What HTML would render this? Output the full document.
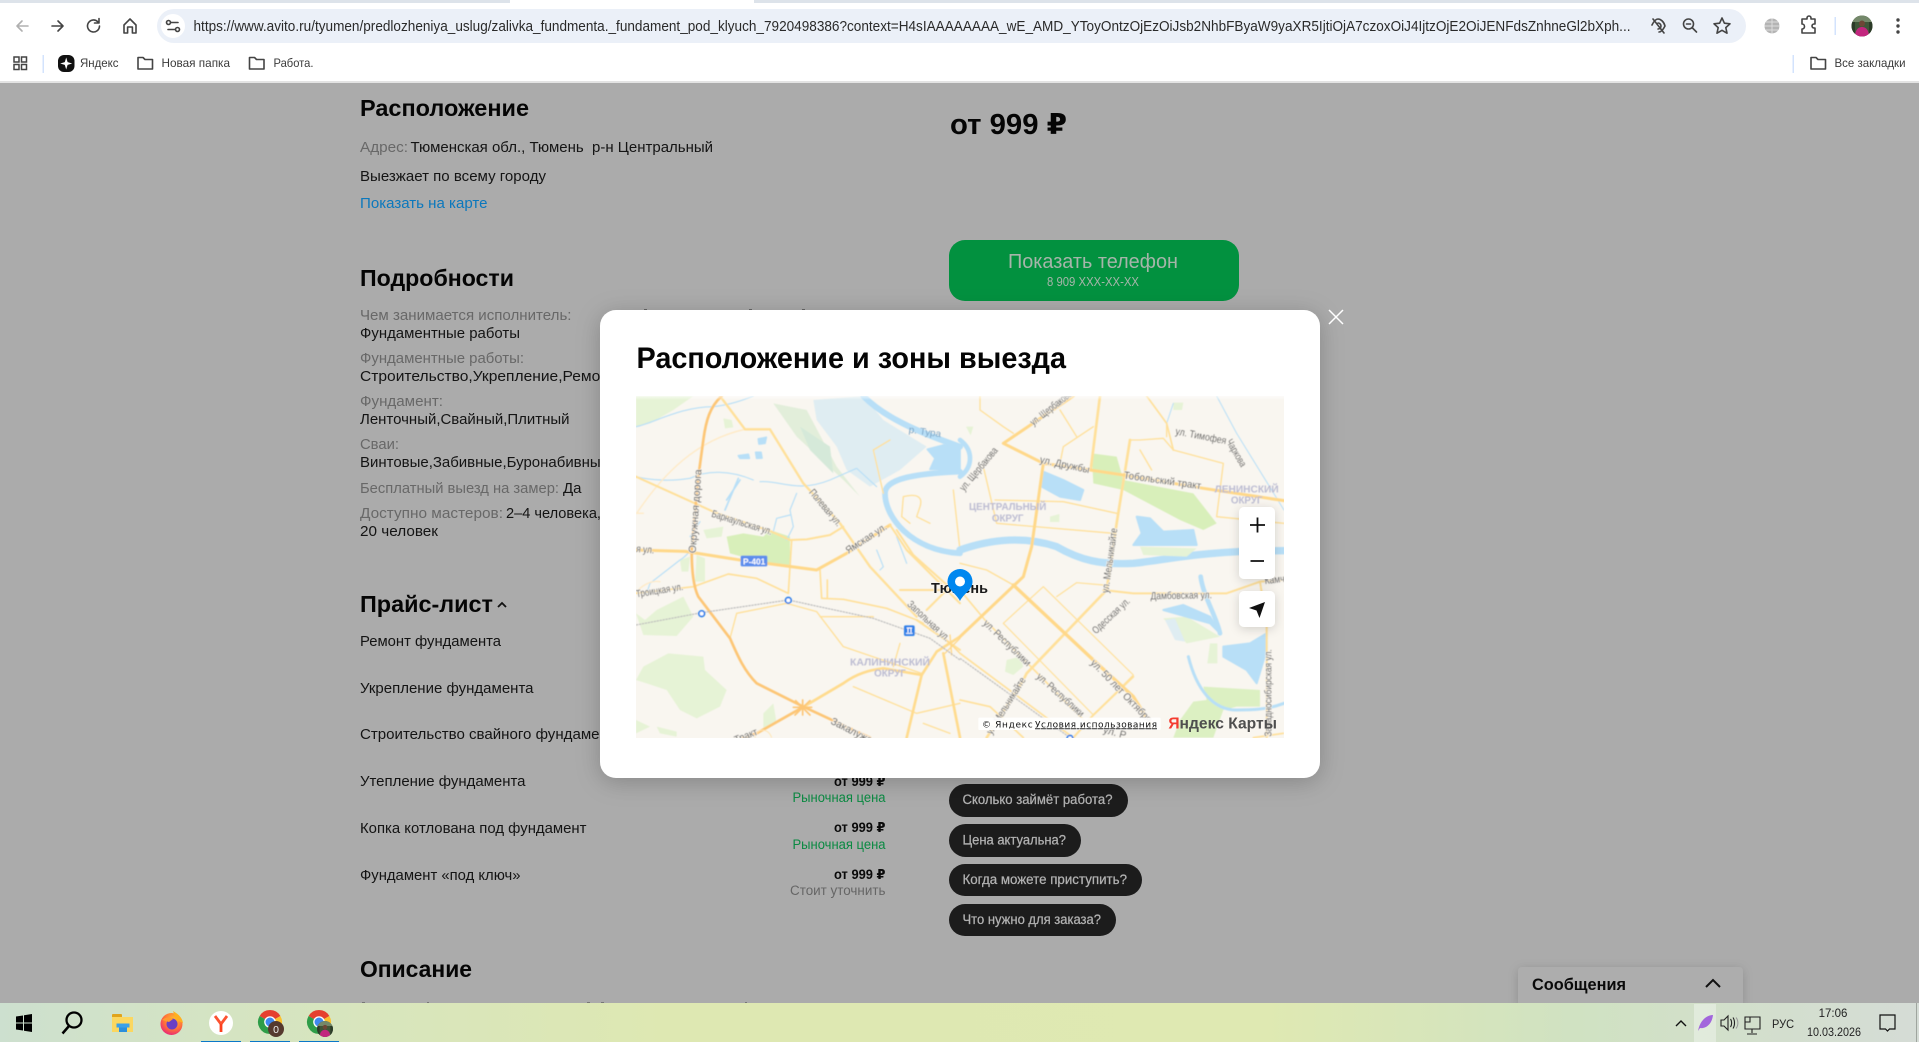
<!DOCTYPE html>
<html lang="ru"><head><meta charset="utf-8"><title>Авито</title>
<style>
html,body{margin:0;padding:0;background:#ababab;overflow:hidden}
svg{display:block;font-family:"Liberation Sans","DejaVu Sans",sans-serif}
.g{fill:#686868}.k{fill:#141414}.b{font-weight:bold;fill:#050505}
.l{font-size:31px;fill:#555;paint-order:stroke;stroke:#f9f6f0;stroke-width:4px}
.o{font-size:29px;font-weight:bold;fill:#bcbcd2;text-anchor:middle}
.i{fill:none;stroke:#444;stroke-width:1.6;stroke-linecap:round;stroke-linejoin:round}
.w{fill:none;stroke:#b8dff7;stroke-linecap:round;stroke-linejoin:round}
.r{fill:none;stroke:#ffe09a;stroke-linecap:round;stroke-linejoin:round}
.m{stroke-linejoin:round}
</style></head><body>
<svg xmlns="http://www.w3.org/2000/svg" width="1919" height="1042" viewBox="0 0 1919 1042">
<defs>
<linearGradient id="tb" x1="0" x2="1" y1="0" y2="0"><stop offset="0" stop-color="#cde0cf"/><stop offset=".12" stop-color="#d5e4c2"/><stop offset=".35" stop-color="#dee8b2"/><stop offset=".66" stop-color="#dfe9b2"/><stop offset=".82" stop-color="#d0e2c2"/><stop offset="1" stop-color="#d5dcd6"/></linearGradient>
<radialGradient id="ff" cx=".6" cy=".3" r=".8"><stop offset="0" stop-color="#ffc22e"/><stop offset=".55" stop-color="#ff7139"/><stop offset="1" stop-color="#e31587"/></radialGradient>
<filter id="sh" x="-10%" y="-10%" width="120%" height="120%"><feDropShadow dx="0" dy="4" stdDeviation="12" flood-color="#000" flood-opacity=".22"/></filter>
<filter id="sm" x="-40%" y="-40%" width="180%" height="180%"><feDropShadow dx="0" dy="2" stdDeviation="5" flood-color="#000" flood-opacity=".16"/></filter>
<filter id="bl" x="0" y="0" width="100%" height="100%"><feGaussianBlur stdDeviation=".45"/></filter>
<clipPath id="mc"><rect x="636" y="396" width="648" height="342"/></clipPath>
<clipPath id="av"><circle cx="0" cy="0" r="10.5"/></clipPath>
<linearGradient id="mt" x1="0" x2="0" y1="0" y2="1"><stop offset="0" stop-color="#fff" stop-opacity=".6"/><stop offset="1" stop-color="#fff" stop-opacity="0"/></linearGradient>
<g id="fold"><path class="i" fill="none" d="M-7,-5.5h5l2,2h7.500v9.500h-14.500z"/></g>
<g id="chr"><path fill="#e5402f" d="M0,0L-10.400,-6A12,12 0 0 1 10.400,-6z"/><path fill="#fbc02d" d="M0,0L10.400,-6A12,12 0 0 1 0,12z"/><path fill="#2e9d48" d="M0,0L0,12A12,12 0 0 1 -10.400,-6z"/><circle r="5.800" fill="#fff"/><circle r="4.500" fill="#3f88ee"/></g>
<g id="face"><circle r="10.500" fill="#3f5638"/><g clip-path="url(#av)"><rect x="-11" y="-11" width="22" height="7" fill="#74886a"/><rect x="-11" y="-4" width="4" height="15" fill="#2c3b28"/><rect x="7" y="-4" width="4" height="15" fill="#2c3b28"/><path d="M-7,11 C-7,3 -3,1 0,1 C3,1 7,3 7,11z" fill="#c2267e"/><circle cx="0" cy="-2.500" r="3" fill="#6e4636"/></g></g>
</defs>

<rect width="1919" height="1042" fill="#ababab"/>

<!-- browser chrome -->
<rect width="1919" height="83" fill="#fff"/>
<rect y="81" width="1919" height="2" fill="#e3e3e3"/>
<rect width="510" height="3" fill="#dde3ea"/><rect x="754" width="1165" height="3" fill="#dde3ea"/>
<rect x="157" y="9" width="1589" height="34" rx="17" fill="#ebf0f8"/>
<path class="i" style="stroke:#b0b0b0" d="M28,26H17M22,21l-5,5 5,5"/>
<path class="i" d="M52,26H63M58,21l5,5-5,5"/>
<path class="i" d="M99.500,26a6,6 0 1 1-1.800,-4.300M99,18.500v4.500h-4.500"/>
<path class="i" d="M124,25l6,-6 6,6v8h-3.600v-6h-4.800v6h-3.600z"/>
<circle cx="173" cy="26" r="12" fill="#fff"/>
<path class="i" d="M171,22.500h7M168,29.500h7"/><circle cx="168.500" cy="22.500" r="2" class="i"/><circle cx="177.500" cy="29.500" r="2" class="i"/>
<text x="193.500" y="31" font-size="14.500" fill="#2a2a2a" textLength="1437" lengthAdjust="spacingAndGlyphs">https://www.avito.ru/tyumen/predlozheniya_uslug/zalivka_fundmenta._fundament_pod_klyuch_7920498386?context=H4sIAAAAAAAA_wE_AMD_YToyOntzOjEzOiJsb2NhbFByaW9yaXR5IjtiOjA7czoxOiJ4IjtzOjE2OiJENFdsZnhneGl2bXph...</text>
<path class="i" d="M1652,25c2,-4 4,-6 6,-6 3,0 6,3 7,7-2,4-4,6-6,6M1653,19l11,14M1658,23a3,3 0 1 1 0,6"/>
<circle class="i" cx="1688.500" cy="24" r="5"/><path class="i" d="M1692.500,28l4,4M1686.500,24h4"/>
<path class="i" d="M1722,18l2.400,5.200 5.600,.6-4.200,3.800 1.200,5.600-5,-2.900-5,2.900 1.200,-5.600-4.200,-3.800 5.600,-.6z"/>
<circle cx="1772" cy="26" r="7.500" fill="#b4b4b4"/><path d="M1764.500,26h15M1772,18.500v15M1766,22h12M1766,30h12" stroke="#dcdcdc" fill="none"/>
<path class="i" d="M1802,19h5v-1a2,2 0 0 1 4,0v1h4v5h-1a2,2 0 0 0 0,4h1v5h-13v-4a2,2 0 0 0 0,-5z"/>
<rect x="1834.500" y="17" width="1.500" height="18" fill="#d3e3fd"/>
<use href="#face" x="1862" y="26"/>
<g fill="#444"><circle cx="1898" cy="20" r="1.700"/><circle cx="1898" cy="26" r="1.700"/><circle cx="1898" cy="32" r="1.700"/></g>

<g fill="none" stroke="#444" stroke-width="1.500"><rect x="14" y="57" width="5" height="5"/><rect x="21.500" y="57" width="5" height="5"/><rect x="14" y="64.500" width="5" height="5"/><rect x="21.500" y="64.500" width="5" height="5"/></g>
<rect x="42.500" y="55" width="1.500" height="18" fill="#d3e3fd"/>
<rect x="58" y="55" width="16.500" height="17" rx="6" fill="#111"/><path d="M66.200,57.500l1.400,4.600 4.600,1.400-4.600,1.400-1.400,4.600-1.400,-4.600-4.600,-1.400 4.600,-1.400z" fill="#fff"/>
<g font-size="11.800" fill="#3a3a3a">
<text x="80" y="67" textLength="38.500" lengthAdjust="spacingAndGlyphs">Яндекс</text>
<text x="161.500" y="67" textLength="68.500" lengthAdjust="spacingAndGlyphs">Новая папка</text>
<text x="273.500" y="67" textLength="40" lengthAdjust="spacingAndGlyphs">Работа.</text>
<text x="1834.500" y="67" textLength="71" lengthAdjust="spacingAndGlyphs">Все закладки</text>
</g>
<use href="#fold" x="145" y="63"/><use href="#fold" x="256.500" y="63"/><use href="#fold" x="1818" y="63"/>
<rect x="1792.500" y="55" width="1.500" height="18" fill="#d3e3fd"/>

<!-- page content -->
<g font-size="15">
<text class="b" x="360" y="116" font-size="23.500" textLength="169" lengthAdjust="spacingAndGlyphs">Расположение</text>
<text class="g" x="360" y="152" textLength="48" lengthAdjust="spacingAndGlyphs">Адрес:</text>
<text class="k" x="410.500" y="152" textLength="302.500" lengthAdjust="spacingAndGlyphs" xml:space="preserve">Тюменская обл., Тюмень  р-н Центральный</text>
<text class="k" x="360" y="181" textLength="186" lengthAdjust="spacingAndGlyphs">Выезжает по всему городу</text>
<text x="360" y="208" fill="#0b78bd" textLength="127.500" lengthAdjust="spacingAndGlyphs">Показать на карте</text>
<text class="b" x="360" y="286" font-size="23.500" textLength="154" lengthAdjust="spacingAndGlyphs">Подробности</text>
<text class="g" x="360" y="320" textLength="211.500" lengthAdjust="spacingAndGlyphs">Чем занимается исполнитель:</text>
<text class="k" x="360" y="338" textLength="160" lengthAdjust="spacingAndGlyphs">Фундаментные работы</text>
<text class="g" x="360" y="363" textLength="164" lengthAdjust="spacingAndGlyphs">Фундаментные работы:</text>
<text class="k" x="360" y="381" textLength="256" lengthAdjust="spacingAndGlyphs">Строительство,Укрепление,Ремонт</text>
<text class="g" x="360" y="406" textLength="83" lengthAdjust="spacingAndGlyphs">Фундамент:</text>
<text class="k" x="360" y="424" textLength="209.500" lengthAdjust="spacingAndGlyphs">Ленточный,Свайный,Плитный</text>
<text class="g" x="360" y="449" textLength="39" lengthAdjust="spacingAndGlyphs">Сваи:</text>
<text class="k" x="360" y="467" textLength="249" lengthAdjust="spacingAndGlyphs">Винтовые,Забивные,Буронабивные</text>
<text class="g" x="360" y="493" textLength="199" lengthAdjust="spacingAndGlyphs">Бесплатный выезд на замер:</text>
<text class="k" x="563" y="493" textLength="18.500" lengthAdjust="spacingAndGlyphs">Да</text>
<text class="g" x="360" y="518" textLength="143" lengthAdjust="spacingAndGlyphs">Доступно мастеров:</text>
<text class="k" x="506" y="518" textLength="95" lengthAdjust="spacingAndGlyphs">2–4 человека,</text>
<text class="k" x="360" y="536" textLength="78" lengthAdjust="spacingAndGlyphs">20 человек</text>

<text class="b" x="360" y="612" font-size="23.500" textLength="133" lengthAdjust="spacingAndGlyphs">Прайс-лист</text>
<path d="M498,607l4,-4 4,4" fill="none" stroke="#111" stroke-width="1.800"/>
<text class="k" x="360" y="646" textLength="141" lengthAdjust="spacingAndGlyphs">Ремонт фундамента</text>
<text class="k" x="360" y="693" textLength="173.500" lengthAdjust="spacingAndGlyphs">Укрепление фундамента</text>
<text class="k" x="360" y="739" textLength="263" lengthAdjust="spacingAndGlyphs">Строительство свайного фундамента</text>
<text class="k" x="360" y="786" textLength="165.500" lengthAdjust="spacingAndGlyphs">Утепление фундамента</text>
<text class="k" x="360" y="833" textLength="226.500" lengthAdjust="spacingAndGlyphs">Копка котлована под фундамент</text>
<text class="k" x="360" y="880" textLength="160.500" lengthAdjust="spacingAndGlyphs">Фундамент «под ключ»</text>
<g font-size="13.500" font-weight="bold" fill="#0a0a0a">
<text x="834" y="786" textLength="51.500" lengthAdjust="spacingAndGlyphs">от 999 ₽</text>
<text x="834" y="832" textLength="51.500" lengthAdjust="spacingAndGlyphs">от 999 ₽</text>
<text x="834" y="879" textLength="51.500" lengthAdjust="spacingAndGlyphs">от 999 ₽</text>
</g>
<g font-size="13.500">
<text x="792.500" y="802" fill="#0a8a42" textLength="93" lengthAdjust="spacingAndGlyphs">Рыночная цена</text>
<text x="792.500" y="849" fill="#0a8a42" textLength="93" lengthAdjust="spacingAndGlyphs">Рыночная цена</text>
<text x="790" y="895" fill="#666" textLength="95.500" lengthAdjust="spacingAndGlyphs">Стоит уточнить</text>
</g>
<g fill="#1c1c1c"><rect x="949" y="784" width="179" height="33" rx="16.500"/><rect x="949" y="824" width="132" height="33" rx="16.500"/><rect x="949" y="864" width="193" height="32" rx="16"/><rect x="949" y="904" width="167" height="32" rx="16"/></g>
<g font-size="13.500" fill="#b2b2b2" stroke="#b2b2b2" stroke-width=".25">
<text x="962.500" y="804" textLength="150" lengthAdjust="spacingAndGlyphs">Сколько займёт работа?</text>
<text x="962.500" y="844.500" textLength="103.500" lengthAdjust="spacingAndGlyphs">Цена актуальна?</text>
<text x="962.500" y="884" textLength="164.500" lengthAdjust="spacingAndGlyphs">Когда можете приступить?</text>
<text x="962.500" y="924" textLength="138.500" lengthAdjust="spacingAndGlyphs">Что нужно для заказа?</text>
</g>
<text class="b" x="360" y="977" font-size="23.500" textLength="112" lengthAdjust="spacingAndGlyphs">Описание</text>
<g fill="#777"><rect x="362" y="1002" width="3" height="1"/><rect x="427" y="1002" width="2" height="1"/><rect x="587" y="1002" width="3" height="1"/><rect x="601" y="1002" width="3" height="1"/><rect x="745" y="1002" width="2" height="1"/></g>

<text class="b" x="950" y="134" font-size="28.500" textLength="117" lengthAdjust="spacingAndGlyphs">от 999 ₽</text>
<rect x="949" y="240" width="290" height="61" rx="16" fill="#02913f"/>
<text x="1008" y="268" font-size="20" fill="#a6b5aa" textLength="170" lengthAdjust="spacingAndGlyphs">Показать телефон</text>
<text x="1047" y="286" font-size="12.500" fill="#a6b5aa" textLength="92" lengthAdjust="spacingAndGlyphs">8 909 XXX-XX-XX</text>
<g fill="#666"><rect x="644" y="309" width="3" height="1"/><rect x="749" y="309" width="3" height="1"/><rect x="802" y="309" width="3" height="1"/></g>
</g>

<!-- modal -->
<rect x="600" y="310" width="720" height="468" rx="16" fill="#fff" filter="url(#sh)"/>
<path d="M1329,310l14,14M1343,310l-14,14" stroke="#fff" stroke-width="1.500" fill="none"/>
<text x="636.500" y="368" font-size="29.500" font-weight="bold" fill="#050505" textLength="429.500" lengthAdjust="spacingAndGlyphs">Расположение и зоны выезда</text>

<!-- map -->
<g clip-path="url(#mc)">
<rect x="636" y="396" width="648" height="342" fill="#f9f6f0"/>
<g filter="url(#bl)">
<g transform="translate(630,390) scale(.33333)">
 <g fill="#e6f3d6">
  <path d="M18,18H190L130,60 60,100 18,110Z"/>
  <path d="M430,40L530,60 620,230 690,320 640,270 500,140Z" fill="#e2eeda"/>
  <path d="M280,85l25,5 5,22-25,3z"/>
  <path d="M18,870L40,830 115,790 220,800 225,840 290,900 270,950 200,985 150,960 110,900 50,880Z"/>
  <path d="M18,670L40,735 140,738 190,680 160,620 80,660 45,690Z"/>
  <path d="M400,970L430,940 440,1000 400,1020Z"/>
  <path d="M18,990L60,1010 18,1030Z"/>
  <path d="M80,1010L140,1025 140,1040 90,1030Z"/>
  <path d="M220,420L280,410 275,440 230,445Z"/>
  <path d="M150,510L180,500 175,545 155,545Z"/>
  <path d="M200,495L225,505 225,575 195,575Z"/>
  <path d="M510,110L600,170 610,250 540,180Z" fill="#d5e9d9"/>
 </g>
 <path d="M550,30L700,18 760,90 890,170 810,240 720,290 650,240 620,170 560,90Z" fill="#dfedf2"/>
 <path d="M290,440L340,430 400,440 420,420 480,440 480,525 410,520 300,490Z" fill="#d8efba"/>
 <g fill="#b8dff7" stroke="#b8dff7" stroke-width="5" stroke-linejoin="round">
  <path d="M385,147l24,-5-4,18-18,2z"/><path d="M377,187l16,0 3,17-16,1z"/><path d="M325,197l30,-4 3,12-28,0z"/>
  <path d="M892,178L940,165 990,175V238L900,238 915,205Z"/>
 </g>
 <path class="w" stroke-width="18" d="M700,18C760,80 860,125 990,170"/>
 <path class="w" stroke-width="17" d="M990,245C860,250 765,265 765,310 765,380 840,480 990,490"/>
 <path class="w" stroke-width="3.500" d="M18,110C70,100 150,50 250,50 300,45 340,30 370,18"/>
 <path class="w" stroke-width="3.500" d="M18,260C60,270 120,275 180,265 230,240 300,240 370,270"/>
 <path class="w" stroke-width="5" d="M325,265L285,360M330,270L290,330"/>
 <path class="w" stroke-width="3.500" d="M390,275C450,270 500,310 600,270L680,235 740,290"/>
 <path class="w" stroke-width="3.500" d="M500,310L480,360 490,410 470,450M480,375L440,385 430,425"/>
 <path class="w" stroke-width="3.500" d="M200,460C190,470 170,500 150,510L60,580 50,610M210,395L180,440"/>
 <path class="w" stroke-width="3.500" d="M740,480L760,530 750,540M800,440L830,520"/>
 <path class="r" style="stroke:#ffeac6" stroke-width="4" d="M20,370C100,250 200,150 345,118M20,370H40M18,610C30,590 60,570 90,575"/>
 <path class="r" stroke-width="7" d="M270,18L345,118H420L520,280 630,400 720,530 860,680"/>
 <path class="r" stroke-width="6" d="M18,260L250,365"/>
 <path class="r" stroke-width="6" d="M250,365L425,425 480,450 530,448 600,435 640,410"/>
 <path class="r" stroke-width="5" d="M18,610L190,590 295,552 380,565 475,610 485,450"/>
 <path class="r" stroke-width="5" d="M570,540L575,625 640,628 770,655 860,690 880,700M592,570V625"/>
 <path class="r" stroke-width="4" d="M300,745L320,670 470,640 560,665 640,770 875,850M570,680L730,680 M810,760L790,830M670,890L860,970 990,940M880,1000L960,1030"/>
 <path class="r" stroke-width="4" d="M730,180L780,150M730,180L760,310"/>
 <path class="r" stroke-width="4" d="M820,320C860,310 880,320 870,350L860,380 900,400M820,320L815,380 840,400M970,300L990,480"/>
 <path class="r" style="stroke:#ffd889" stroke-width="9" d="M18,480L165,484 330,510 410,520 560,540 650,490 780,405"/>
 <path class="r" stroke-width="6" d="M780,405L830,480 990,640M800,420L850,495 990,620M810,600H990M890,660L990,560M860,690L990,780"/>
 <path class="r" style="stroke:#ffdb8e" stroke-width="8" d="M518,952L640,880C680,850 720,840 760,835L875,855"/>
 <path class="r" style="stroke:#ffdb8e" stroke-width="8" d="M875,855L830,1043M875,855L920,785 990,740M940,790L990,1043"/>
 <path class="r" style="stroke:#ffd889" stroke-width="4" d="M945,745L990,790M945,790L990,745M960,735L965,795"/>
 <path class="r" style="stroke:#fdc676" stroke-width="8" d="M275,18C240,50 228,90 220,150L205,260 185,480C185,540 190,590 205,620L300,745C320,790 340,840 380,880L520,950 720,1043M518,952L380,1030 340,1043"/>
 <path class="r" style="stroke:#fdc676" stroke-width="5" d="M497,932L540,975M540,932L495,975M518,930V975M490,952H545"/>
 <path fill="none" stroke="#ffe6b5" stroke-width="3" d="M375,1043c5,-30 40,-30 50,0"/>
 <path fill="none" stroke="#bdbdbd" stroke-width="3.500" stroke-dasharray="7 2" d="M18,705L215,668 475,630 730,685 900,745 990,810"/>
 <circle cx="215" cy="671" r="8.500" fill="#fff" stroke="#1f7bea" stroke-width="5"/>
 <circle cx="475" cy="631" r="8.500" fill="#fff" stroke="#1f7bea" stroke-width="5"/>
 <rect x="822" y="706" width="32" height="32" rx="5" fill="#2f80e8"/>
 <path d="M830,714h16M834,714v14M843,714v14M828,730h20" stroke="#fff" stroke-width="3" fill="none"/>
 <rect x="332" y="497" width="80" height="32" rx="4" fill="#5c8ded"/>
 <text x="339" y="523" font-size="25" font-weight="bold" fill="#fff" textLength="67" lengthAdjust="spacingAndGlyphs">Р-401</text>
 <text x="835" y="128" transform="rotate(8 835 128)" font-size="29" fill="#7aa3c4" textLength="98" lengthAdjust="spacingAndGlyphs">р. Тура</text>
 <text class="l" transform="translate(197,490) rotate(-86)" textLength="252" lengthAdjust="spacingAndGlyphs">Окружная дорога</text>
 <text class="l" transform="translate(243,380) rotate(17)" font-size="28" textLength="188" lengthAdjust="spacingAndGlyphs">Барнаульская ул.</text>
 <text class="l" transform="translate(536,308) rotate(50)" textLength="134" lengthAdjust="spacingAndGlyphs">Полевая ул.</text>
 <text class="l" transform="translate(655,492) rotate(-33)" textLength="140" lengthAdjust="spacingAndGlyphs">Ямская ул.</text>
 <text class="l" x="18" y="486" transform="rotate(5 18 486)" textLength="54" lengthAdjust="spacingAndGlyphs">я ул.</text>
 <text class="l" transform="translate(20,622) rotate(-9)" textLength="142" lengthAdjust="spacingAndGlyphs">Троицкая ул.</text>
 <text class="l" transform="translate(830,645) rotate(43)" textLength="162" lengthAdjust="spacingAndGlyphs">Запольная ул.</text>
 <text class="l" transform="translate(600,1000) rotate(27)" textLength="135" lengthAdjust="spacingAndGlyphs">Закалужа</text>
 <text class="l" transform="translate(318,1060) rotate(-22)" textLength="72" lengthAdjust="spacingAndGlyphs">Тракт</text>
 <text class="o" x="780" y="826" textLength="240" lengthAdjust="spacingAndGlyphs">КАЛИНИНСКИЙ</text>
 <text class="o" x="780" y="860" textLength="95" lengthAdjust="spacingAndGlyphs">ОКРУГ</text>
</g>
<g transform="translate(960,390) scale(.33333)">
 <g fill="#e6f3d6">
  <path d="M640,38h30l-4,22h-26z"/><path d="M18,110h22l-8,26z"/><path d="M270,380l28,-8v24h-28z"/>
  <path d="M610,685L680,680 780,740 680,760Z"/>
  <path d="M750,760l22,0 0,60-30,0z"/><path d="M140,810l40,-10 10,30-30,25-25,-10z"/>
 </g>
 <path d="M395,190L470,200 490,270 700,310 770,400 730,420 660,390 490,300 400,280Z" fill="#d8efba"/>
 <path d="M660,990L700,935 740,930 730,890 900,900 900,950 830,950 790,960 760,1043H640Z" fill="#dcf0c2"/>
 <path d="M615,690l30,-5 30,70-30,-5z" fill="#dfedf2"/>
 <g fill="#b8dff7" stroke="#b8dff7" stroke-width="6" stroke-linejoin="round">
  <path d="M530,380L570,385 610,425 700,420 710,465 520,465 545,430Z"/>
  <path d="M250,245L310,270 370,300 360,330 300,320 245,290Z"/>
  <path d="M610,660L670,645 750,680 780,730 750,700 680,680Z"/>
  <path d="M790,770L870,760 920,730 920,780 890,880 860,840 790,800Z"/>
 </g>
 <path class="w" stroke-width="22" d="M0,480C100,445 200,440 290,470 360,510 420,525 520,520 620,510 720,482 972,482"/>
 <path class="w" stroke-width="14" d="M0,150C40,180 40,230 0,260"/>
 <path class="w" stroke-width="14" d="M722,560C730,620 770,680 780,730"/>
 <path class="w" stroke-width="9" d="M685,800C710,900 760,960 830,960 870,960 920,960 972,940"/>
 <path class="w" stroke-width="3" d="M620,100L640,40M770,18L830,130 972,360"/>
 <path d="M540,470l170,5-30,25-130,-5z" fill="#e6f3d6"/>
 <path class="r" stroke-width="4" d="M60,18V60L130,110 160,130M300,60L350,140M300,220L310,170 400,110M510,150L540,150 610,145 640,180 790,220 770,380 972,400M540,180L575,240M70,230L110,400 460,430M105,330L310,335 470,370M0,520L80,540 160,585M620,100V140"/>
 <path class="r" stroke-width="3.500" d="M250,590L520,855 400,975 130,700ZM290,620L350,578 430,585"/>
 <path class="r" stroke-width="5" d="M560,18L620,100 640,180M0,600L75,690 380,1000M0,930L90,950 190,1043M0,790L340,1043M880,1043L970,1030"/>
 <path class="r" stroke-width="8" d="M420,18L392,240M510,150L470,400 440,600 200,850 190,870 80,1043"/>
 <path class="r" stroke-width="6" d="M430,600L520,610 800,610 900,575 972,570M920,700V1043M900,575L920,700M340,1043L400,975 520,860"/>
 <path class="r" style="stroke:#ffd889" stroke-width="9" d="M130,160L340,18M130,160L250,220 390,240 490,255 730,295 972,332"/>
 <path class="r" style="stroke:#ffd889" stroke-width="9" d="M250,220L215,470 190,560 0,740"/>
 <path class="r" style="stroke:#ffd889" stroke-width="10" d="M160,585L400,810 520,920 570,1000"/>
 <path fill="none" stroke="#bdbdbd" stroke-width="3.500" stroke-dasharray="7 2" d="M0,805L330,1043"/>
 <circle cx="330" cy="1045" r="8.500" fill="#fff" stroke="#1f7bea" stroke-width="5"/>
 <text class="l" transform="translate(220,108) rotate(-38)" textLength="150" lengthAdjust="spacingAndGlyphs">ул. Щербакова</text>
 <text class="l" transform="translate(12,305) rotate(-50)" textLength="160" lengthAdjust="spacingAndGlyphs">ул. Щербакова</text>
 <text class="l" transform="translate(238,218) rotate(12)" textLength="152" lengthAdjust="spacingAndGlyphs">ул. Дружбы</text>
 <text class="l" transform="translate(490,265) rotate(8)" textLength="234" lengthAdjust="spacingAndGlyphs">Тобольский тракт</text>
 <text class="l" transform="translate(645,133) rotate(11)" font-size="27" textLength="155" lengthAdjust="spacingAndGlyphs">ул. Тимофея</text>
 <text class="l" transform="translate(798,155) rotate(60)" font-size="27" textLength="90" lengthAdjust="spacingAndGlyphs">Чаркова</text>
 <text class="o" x="860" y="308" textLength="192" lengthAdjust="spacingAndGlyphs">ЛЕНИНСКИЙ</text>
 <text class="o" x="860" y="340" textLength="95" lengthAdjust="spacingAndGlyphs">ОКРУГ</text>
 <text class="o" x="143" y="360" textLength="232" lengthAdjust="spacingAndGlyphs">ЦЕНТРАЛЬНЫЙ</text>
 <text class="o" x="143" y="394" textLength="95" lengthAdjust="spacingAndGlyphs">ОКРУГ</text>
 <text class="l" transform="translate(445,610) rotate(-82)" textLength="196" lengthAdjust="spacingAndGlyphs">ул. Мельникайте</text>
 <text class="l" transform="translate(572,628) rotate(-1)" textLength="184" lengthAdjust="spacingAndGlyphs">Дамбовская ул.</text>
 <text class="l" transform="translate(408,733) rotate(-43)" textLength="142" lengthAdjust="spacingAndGlyphs">Одесская ул.</text>
 <text class="l" transform="translate(68,702) rotate(44)" textLength="185" lengthAdjust="spacingAndGlyphs">ул. Республики</text>
 <text class="l" transform="translate(228,862) rotate(42)" textLength="180" lengthAdjust="spacingAndGlyphs">ул. Республики</text>
 <text class="l" transform="translate(95,1035) rotate(-58)" textLength="195" lengthAdjust="spacingAndGlyphs">ул. Мельникайте</text>
 <text class="l" transform="translate(390,820) rotate(46)" textLength="250" lengthAdjust="spacingAndGlyphs">ул. 50 лет Октября</text>
 <text class="l" transform="translate(915,582) rotate(-6)" textLength="60" lengthAdjust="spacingAndGlyphs">Камч</text>
 <text class="l" transform="translate(935,1040) rotate(-90)" font-size="27" textLength="262" lengthAdjust="spacingAndGlyphs">Западносибирская ул.</text>
 <text class="l" transform="translate(428,1028) rotate(15)" textLength="70" lengthAdjust="spacingAndGlyphs">ул. Р</text>
</g>
</g>
<g transform="translate(960,390) scale(.33333)">
 <rect x="55" y="983" width="547" height="37" rx="3" fill="#fff" fill-opacity=".92"/>
 <text x="66" y="1012" font-size="27" fill="#111" font-family="DejaVu Sans" textLength="152" lengthAdjust="spacing">© Яндекс</text>
 <text x="225" y="1012" font-size="27" fill="#111" text-decoration="underline" font-family="DejaVu Sans" textLength="366" lengthAdjust="spacing">Условия использования</text>
 <text x="625" y="1016" font-size="46" font-weight="bold" fill="#4f4f4f" textLength="326" lengthAdjust="spacingAndGlyphs"><tspan fill="#f43b2f">Я</tspan>ндекс Карты</text>
</g>
<rect x="636" y="396" width="648" height="4" fill="url(#mt)"/>
<text x="931" y="593" font-size="15" font-weight="bold" fill="#1a1a1a" textLength="57" lengthAdjust="spacingAndGlyphs" style="paint-order:stroke;stroke:#f9f6f0;stroke-width:1.500px">Тюмень</text>
<path d="M960,601C956,593 947.500,590 947.500,581.500A12.500,12.500 0 0 1 972.500,581.500C972.500,590 964,593 960,601Z" fill="#0087ef"/>
<circle cx="960" cy="581.500" r="5" fill="#fff"/>
<rect x="1239" y="507" width="36" height="72" rx="5" fill="#fff" filter="url(#sm)"/>
<rect x="1239" y="591" width="36" height="36" rx="5" fill="#fff" filter="url(#sm)"/>
<path d="M1250,525h15M1257.500,517.500v15M1250.500,561h13.500" stroke="#111" stroke-width="1.800" fill="none"/>
<path d="M1249,608L1265,602 1259.500,618 1256.500,610.500Z" fill="#111"/>
</g>

<!-- messages panel -->
<rect x="1518" y="967" width="225" height="40" rx="4" fill="#adadad" filter="url(#sm)"/>
<text x="1532" y="990" font-size="17" font-weight="bold" fill="#0a0a0a" textLength="94" lengthAdjust="spacingAndGlyphs">Сообщения</text>
<path d="M1706,987l7,-7 7,7" fill="none" stroke="#111" stroke-width="2"/>

<!-- taskbar -->
<rect y="1003" width="1919" height="39" fill="url(#tb)"/>
<path d="M16,1016.500l7,-1v7h-7zM24,1015.300l8,-1.300v8.500h-8zM16,1023.500h7v7l-7,-1zM24,1023.500h8v8.500l-8,-1.300z" fill="#000"/>
<circle cx="74" cy="1020" r="7.500" fill="none" stroke="#000" stroke-width="2.300"/><path d="M69,1026l-6.500,7.500" stroke="#000" stroke-width="2.500"/>
<rect x="112" y="1014" width="10" height="5" rx="1" fill="#e0a41c"/><rect x="112" y="1017" width="21" height="15" fill="#fbd760"/><rect x="119" y="1026" width="8" height="6" fill="#2b8fdc"/><rect x="116.500" y="1023.500" width="13" height="4" fill="#3ba0e8"/>
<circle cx="171.500" cy="1024" r="11" fill="url(#ff)"/><path d="M173,1011c5,3 9,6 10,12l-7,-3z" fill="#ffb020"/><circle cx="172" cy="1024" r="5.500" fill="#6a3fc4"/><path d="M162,1020c3,-3 7,-3 11,-1l-4,3z" fill="#ff9a30"/>
<circle cx="221" cy="1023" r="12" fill="#fff"/><path d="M215,1016l6,8 6,-8" fill="none" stroke="#fc5230" stroke-width="2.800"/><path d="M221,1024v8" stroke="#fc3f1d" stroke-width="2.800"/>
<use href="#chr" x="270" y="1022"/><circle cx="276" cy="1029" r="8" fill="#55392e"/><text x="276" y="1033" font-size="10.500" fill="#eee" text-anchor="middle">0</text>
<use href="#chr" x="319" y="1022"/><g transform="translate(325,1029) scale(.76)"><use href="#face"/></g>
<g fill="#0a78c8"><rect x="201" y="1041" width="40" height="1"/><rect x="250" y="1041" width="40" height="1"/><rect x="299" y="1041" width="40" height="1"/></g>

<path d="M1676,1026l5,-5 5,5" fill="none" stroke="#111" stroke-width="1.400"/>
<rect x="1694" y="1004" width="22" height="38" fill="#fff" fill-opacity=".35"/>
<path d="M1698,1031C1700,1020 1707,1015 1713,1015 1712,1024 1706,1029 1700,1028Z" fill="#a266dc"/>
<path d="M1721,1020h3l4,-4v14l-4,-4h-3zM1730.500,1019c1.500,2 1.500,6 0,8M1733,1017.500c2,3 2,8 0,11" fill="none" stroke="#222" stroke-width="1.100"/>
<path d="M1736,1017.500c2.500,3 2.500,8 0,11" fill="none" stroke="#999"/>
<path d="M1745,1018v-1h15v12h-15zM1752,1029v4M1747,1034h10M1745,1017h5v5h-5z" fill="none" stroke="#222" stroke-width="1.100"/>
<text x="1772" y="1028" font-size="12" fill="#222" textLength="22" lengthAdjust="spacingAndGlyphs">РУС</text>
<text x="1833" y="1017" font-size="11.500" fill="#222" text-anchor="middle">17:06</text>
<text x="1834" y="1036" font-size="11.500" fill="#222" text-anchor="middle" textLength="54" lengthAdjust="spacingAndGlyphs">10.03.2026</text>
<path d="M1880,1015h15v14h-5.500l-2,2-2,-2h-5.500z" fill="none" stroke="#111" stroke-width="1.200"/>
<rect x="1916" y="1003" width="1" height="39" fill="#9fa59f"/>
</svg>
</body></html>
